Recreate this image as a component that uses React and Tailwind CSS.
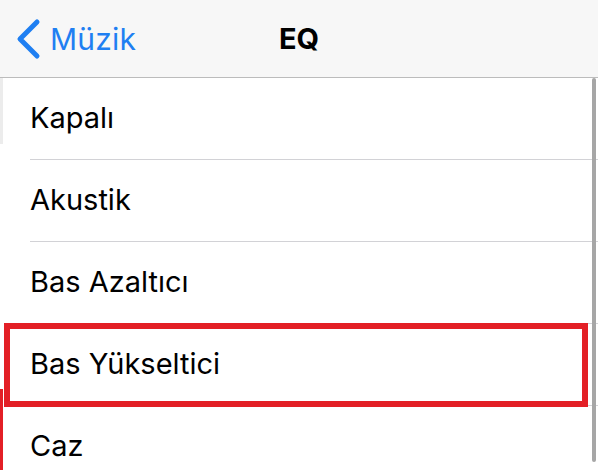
import { useState } from 'react';

const presets = ['Kapalı', 'Akustik', 'Bas Azaltıcı', 'Bas Yükseltici', 'Caz'];

function App() {
  const [selected] = useState(3);

  return (
    <div className="relative w-[598px] h-[470px] overflow-hidden bg-white font-['Inter','Noto_Sans',sans-serif]">
      {/* Nav bar */}
      <div className="h-[78px] bg-[#f7f7f7] border-b border-[#bcbcbc] grid grid-cols-[1fr_auto_1fr] items-center">
        <button className="flex items-center pl-[14px] text-[#1f7ff2] justify-self-start">
          <svg width="28" height="42" viewBox="0 0 28 42" fill="none">
            <path d="M23 4 L6 21 L23 38" stroke="#1f7ff2" strokeWidth="5" strokeLinecap="round" strokeLinejoin="round" />
          </svg>
          <span className="ml-[8px] text-[30px] leading-none tracking-[0.2px]">Müzik</span>
        </button>
        <span className="text-[29px] font-bold text-black leading-none">EQ</span>
        <div />
      </div>

      {/* List */}
      <ul>
        {presets.map((name, i) => (
          <li key={name} className="pl-[30px]">
            <div className={`h-[82px] flex items-center pb-[3px] ${i < presets.length - 1 ? 'border-b border-[#d2d2d6]' : ''}`}>
              <span className="text-[29px] text-black leading-none">{name}</span>
            </div>
          </li>
        ))}
      </ul>

      {/* scroll indicator */}
      <div className="absolute left-[592px] top-[78px] w-[4px] h-[384px] bg-[#a6a6a6] rounded-full" />
      <div className="absolute left-0 top-[78px] w-[3px] h-[66px] bg-[#ececec]" />

      {/* highlight annotation */}
      {selected === 3 && (
        <>
          <div className="absolute left-[4px] top-[323px] w-[584px] h-[84px] border-[6px] border-[#e31f26]" />
          <div className="absolute left-0 top-[389px] w-[3px] h-[81px] bg-[#e31f26]" />
        </>
      )}
    </div>
  );
}

export default App;
